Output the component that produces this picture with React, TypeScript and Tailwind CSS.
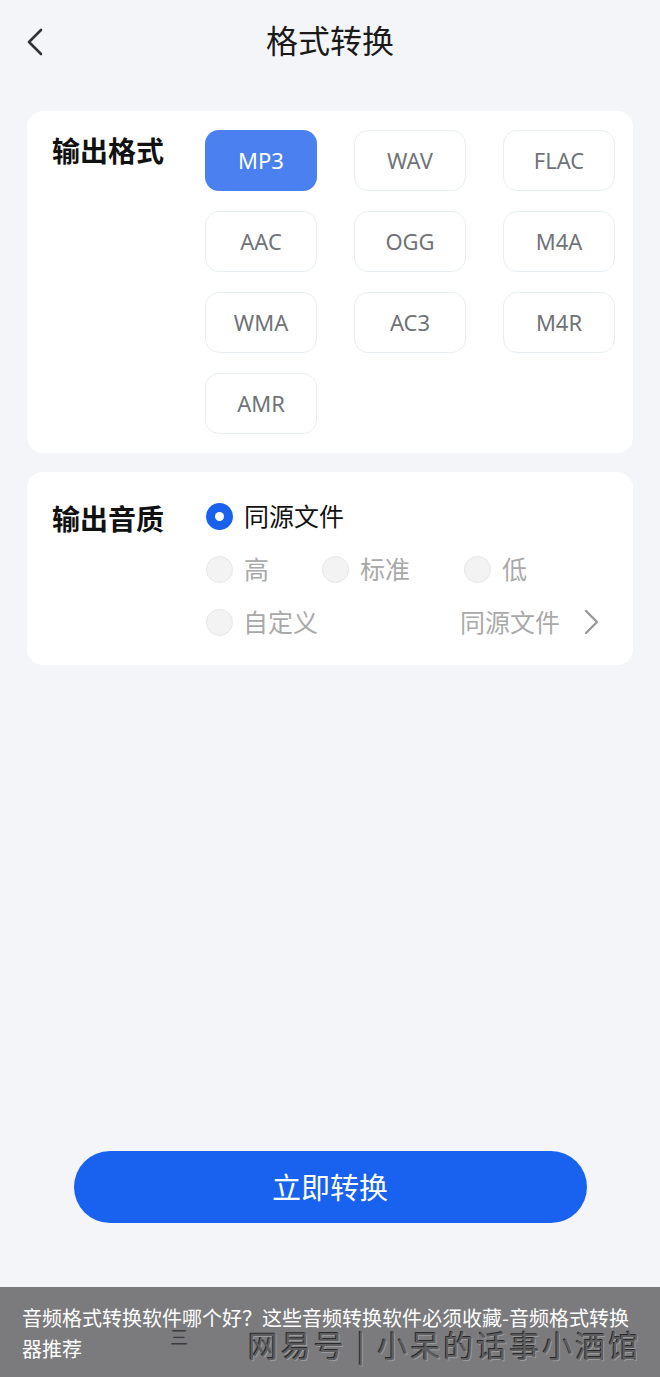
import React from "react";

const formats = ["MP3", "WAV", "FLAC", "AAC", "OGG", "M4A", "WMA", "AC3", "M4R", "AMR"];

function Radio({ checked }: { checked?: boolean }) {
  if (checked) {
    return (
      <span className="flex h-[27px] w-[27px] shrink-0 items-center justify-center rounded-full bg-[#1a62ee]">
        <span className="h-[9px] w-[9px] rounded-full bg-white" />
      </span>
    );
  }
  return <span className="h-[27px] w-[27px] shrink-0 rounded-full border border-[#e6e6e6] bg-[#f3f3f3]" />;
}

export default function App() {
  const cjk = { fontFamily: '"Noto Sans CJK SC", "Noto Sans", sans-serif' };
  return (
    <div className="relative flex h-[1377px] w-[660px] flex-col overflow-hidden bg-[#f4f5f9]" style={cjk}>
      {/* header */}
      <div className="relative flex h-[80px] shrink-0 items-center justify-center pb-[2px]">
        <svg className="absolute left-[24px] top-[28px]" width="22" height="28" viewBox="0 0 22 28" fill="none">
          <path d="M17 2 L5 14 L17 26" stroke="#333" strokeWidth="2.6" strokeLinecap="round" strokeLinejoin="round" />
        </svg>
        <span className="text-[32px] font-normal leading-none text-[#1a1a1a]">格式转换</span>
      </div>

      <div className="flex flex-col gap-[19px] px-[27px] pt-[31px]">
        {/* output format card */}
        <div className="flex rounded-[16px] bg-white pb-[19px] pl-[25px] pr-[18px] pt-[19px]">
          <div className="w-[153px] shrink-0 pt-[1px] text-[28px] font-bold leading-[38px] text-[#111]">输出格式</div>
          <div className="grid grid-cols-[112px_112px_112px] gap-x-[37px] gap-y-[20px]">
            {formats.map((f, i) => (
              <div
                key={f}
                className={
                  i === 0
                    ? "flex h-[61px] items-center justify-center rounded-[14px] bg-[#4a80f0] text-[22px] text-white"
                    : "flex h-[61px] items-center justify-center rounded-[14px] border border-[#e7eef2] bg-white text-[22px] text-[#707378]"
                }
                style={{ fontFamily: '"Noto Sans", sans-serif' }}
              >
                {f}
              </div>
            ))}
          </div>
        </div>

        {/* output quality card */}
        <div className="flex rounded-[16px] bg-white pb-[23px] pl-[25px] pr-[34px] pt-[24px]">
          <div className="w-[154px] shrink-0 pt-[2px] text-[28px] font-bold leading-[40px] text-[#111]">输出音质</div>
          <div className="flex flex-1 flex-col gap-[13px]">
            <div className="flex h-[40px] items-center gap-[11px]">
              <Radio checked />
              <span className="text-[25px] text-[#111]">同源文件</span>
            </div>
            <div className="flex h-[40px] items-center text-[25px] text-[#a9a9a9]">
              <div className="flex w-[116px] items-center gap-[11px]">
                <Radio />
                <span>高</span>
              </div>
              <div className="flex w-[142px] items-center gap-[11px]">
                <Radio />
                <span>标准</span>
              </div>
              <div className="flex items-center gap-[11px]">
                <Radio />
                <span>低</span>
              </div>
            </div>
            <div className="flex h-[40px] items-center justify-between text-[25px] text-[#a9a9a9]">
              <div className="flex items-center gap-[10px]">
                <Radio />
                <span>自定义</span>
              </div>
              <div className="flex items-center gap-[24px]">
                <span>同源文件</span>
                <svg width="15" height="26" viewBox="0 0 15 26" fill="none">
                  <path d="M2 2 L13 13 L2 24" stroke="#999" strokeWidth="2.4" strokeLinecap="round" strokeLinejoin="round" />
                </svg>
              </div>
            </div>
          </div>
        </div>
      </div>

      <div className="flex-1" />

      {/* convert button */}
      <div className="flex shrink-0 justify-center pb-[64px]">
        <div className="flex h-[72px] w-[513px] items-center justify-center rounded-full bg-[#1862ef] text-[29px] font-normal text-white">
          立即转换
        </div>
      </div>

      {/* bottom banner */}
      <div className="relative h-[90px] shrink-0 bg-[#7b7b7d] px-[22px] pt-[15px]">
        <p className="text-[20px] leading-[31px] text-white">
          音频格式转换软件哪个好？这些音频转换软件必须收藏-音频格式转换器推荐
        </p>
        <span className="pointer-events-none absolute left-[170px] top-[40px] text-[18px] leading-none text-[#3a3a3a]">
          三
        </span>
        <span
          className="pointer-events-none absolute left-[248px] top-[42px] whitespace-nowrap text-[30px] leading-none tracking-[3px] text-[#5e5e60]"
          style={{ textShadow: "-1px -1px 0 #2a2a2a, 1px 1px 0 #9a9a9a" }}
        >
          网易号 | 小呆的话事小酒馆
        </span>
      </div>
    </div>
  );
}
